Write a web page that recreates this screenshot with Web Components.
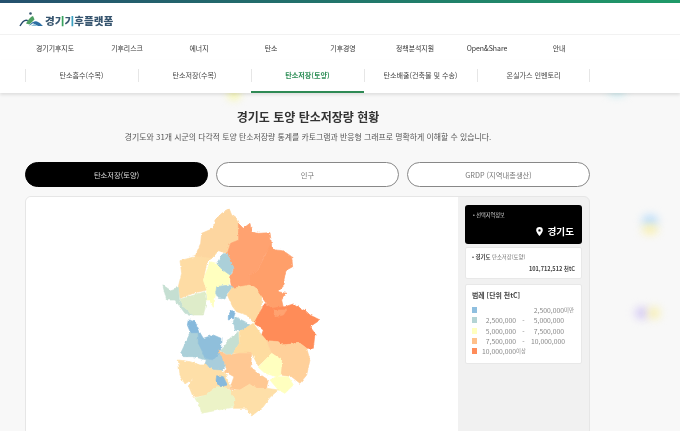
<!DOCTYPE html>
<html lang="ko"><head><meta charset="utf-8"><title>경기기후플랫폼</title>
<style>
html,body{margin:0;height:431px;overflow:hidden;background:#f8f8f8}
body{font-family:"Noto Sans CJK KR","Noto Sans",sans-serif;color:#444;position:relative;filter:blur(.35px)}
.blob{position:absolute;border-radius:50%;filter:blur(4px)}
</style></head><body>
<template id="t-header"><style>
:host{display:block;background:#fff;height:35px;box-sizing:border-box;border-bottom:1px solid #f2f2f2}
.bar{height:3px;background:linear-gradient(90deg,#24506e,#1f9a68)}
.l{display:flex;align-items:center;gap:1px;padding:7px 0 0 19px}
b{font-size:10.6px;font-weight:900;color:#37556f;line-height:19px;position:relative;top:1px}
i{font-style:normal;background:linear-gradient(90deg,#37556f 52%,#3aa35f 52%);-webkit-background-clip:text;background-clip:text;color:transparent}
i.c{background-image:linear-gradient(90deg,#37556f 52%,#3a9fc0 52%)}
</style><div class="bar"></div><div class="l"><svg width="25" height="18" viewBox="0 0 25 18"><circle cx="11.5" cy="2.5" r="1.3" fill="#37556f"/><path d="M1 15C3.5 10.5 6.5 8.5 8.8 9.7" fill="none" stroke="#24486b" stroke-width="1.4"/><path d="M7 12.5C9 8.5 12 5.5 14 5L15.5 8.5 10.5 13.5Z" fill="#4d9f62"/><path d="M10 15C13 10.5 17 9.5 19 11 21 12 22.5 13.5 24 15L19 15 14 12.3Z" fill="#2d6fa3"/><path d="M12 15 15 13.1 19 15Z" fill="#8bbfd8"/></svg><b>경<i>기</i><i class="c">기</i>후플랫폼</b></div></template>

<template id="t-nav"><style>
:host{display:grid;grid-template-columns:repeat(8,72px);padding-left:19px;height:25px;background:#fff;font-size:6.9px;color:#333;align-items:center;text-align:center}
::slotted(span){display:block}
</style><slot></slot></template>

<template id="t-sub"><style>
:host{display:block;background:#fff;height:33px;box-shadow:0 2px 3px rgba(0,0,0,.1);position:relative}
.r{display:grid;grid-template-columns:repeat(5,113px);padding-left:25px;height:33px}
</style><div class="r"><slot></slot></div></template>

<template id="t-subitem"><style>
:host{display:flex;align-items:center;justify-content:center;font-size:7.1px;color:#444;height:33px;box-sizing:border-box;position:relative;border-bottom:2px solid transparent;padding-bottom:2px}
:host([active]){color:#2f8f58;font-weight:700;border-bottom-color:#2f8a55}
:host::before{content:"";position:absolute;left:0;top:9px;height:13px;width:1px;background:#e6e6e6}
:host([last])::after{content:"";position:absolute;right:0;top:9px;height:13px;width:1px;background:#e6e6e6}
</style><slot></slot></template>

<template id="t-hero"><style>
:host{display:block;width:616px;text-align:center}
h1{margin:14px 0 0;font-size:12px;line-height:20px;font-weight:700;color:#333}
p{margin:3px 0 0;font-size:7.9px;line-height:14px;color:#555}
</style><h1>경기도 토양 탄소저장량 현황</h1><p>경기도와 31개 시군의 다각적 토양 탄소저장량 통계를 카토그램과 반응형 그래프로 명확하게 이해할 수 있습니다.</p></template>

<template id="t-tabs"><style>
:host{display:flex;gap:8px;margin:18px 0 0 25px;width:565px}
</style><slot></slot></template>
<template id="t-tab"><style>
:host{flex:1;height:25px;box-sizing:border-box;border:1px solid #888;border-radius:13px;background:#fff;color:#777;font-size:7.3px;display:flex;align-items:center;justify-content:center}
:host([on]){background:#000;border-color:#000;color:#ddd}
</style><slot></slot></template>

<template id="t-card"><style>
:host{display:flex;margin:9px 0 0 25px;width:565px;height:240px;box-sizing:border-box;border:1px solid #e6e6e6;border-radius:6px;background:#f1f1f1;overflow:hidden}
.m{width:432px;background:#fff;flex:none}
.s{flex:1;padding:8px 7px 0 7px;display:flex;flex-direction:column;gap:3px}
</style><div class="m"><slot name="map"></slot></div><div class="s"><slot></slot></div></template>

<template id="t-map"><style>
:host{display:block}
svg{display:block;width:432px;height:238px}
</style><svg viewBox="26 197 432 238"><defs><filter id="j" x="-5%" y="-5%" width="110%" height="110%"><feTurbulence type="fractalNoise" baseFrequency=".08" numOctaves="2" seed="4"/><feDisplacementMap in="SourceGraphic" scale="9" xChannelSelector="R" yChannelSelector="G"/><feGaussianBlur stdDeviation=".9"/></filter></defs><g transform="translate(150 200) scale(.3333)" stroke-width="2" stroke-linejoin="round" id="g" filter="url(#j)"></g></svg></template>

<template id="t-sel"><style>
:host{display:block;background:#000;color:#fff;border-radius:3px;height:39px;box-sizing:border-box;padding:5px 8px 0;position:relative}
.a{font-size:5.2px;line-height:9px;color:#ddd}
.b{display:flex;justify-content:flex-end;align-items:center;gap:5px;font-size:9.6px;font-weight:700;line-height:15px;margin-top:5px}
</style><div class="a">• 선택지역정보</div><div class="b"><svg width="7" height="9" viewBox="0 0 7 9"><path fill="#fff" fill-rule="evenodd" d="M3.5 0A3.3 3.3 0 0 0 .2 3.3C.2 5.6 3.5 9 3.5 9S6.8 5.6 6.8 3.3A3.3 3.3 0 0 0 3.5 0ZM3.5 2.2a1.2 1.2 0 1 1 0 2.4 1.2 1.2 0 0 1 0-2.4Z"/></svg>경기도</div></template>

<template id="t-val"><style>
:host{display:block;background:#fff;border:1px solid #e8e8e8;border-radius:2px;height:32px;box-sizing:border-box;padding:5px 6px;font-size:5.4px;color:#777}
.a{line-height:9px}.a b{color:#333}
.v{text-align:right;font-size:5.6px;font-weight:700;color:#444;line-height:9px;margin-top:3px}
</style><div class="a"><b>• 경기도</b> 탄소저장(토양)</div><div class="v">101,712,512 천tC</div></template>

<template id="t-legend"><style>
:host{display:block;background:#fff;border:1px solid #e8e8e8;border-radius:2px;height:80px;box-sizing:border-box;padding:4px 6px 0;margin-top:2px}
h2{margin:0 0 4px;font-size:6.9px;line-height:12px;font-weight:700;color:#444}
.g{display:grid;grid-template-columns:5px 39px 15px 33px auto;grid-auto-rows:10.3px;align-items:center;font-size:6.8px;color:#888;white-space:nowrap}
s{text-decoration:none;width:5px;height:6px;display:block}
.r{text-align:right}.c{text-align:center}.u{font-size:5.4px}
</style><h2>범례 [단위 천tC]</h2><div class="g">
<s style="background:#8fbfdf"></s><span></span><span></span><span class="r">2,500,000</span><span class="u">미만</span>
<s style="background:#b4d4d4"></s><span class="r">2,500,000</span><span class="c">-</span><span class="r">5,000,000</span><span></span>
<s style="background:#ffffbf"></s><span class="r">5,000,000</span><span class="c">-</span><span class="r">7,500,000</span><span></span>
<s style="background:#ffc08a"></s><span class="r">7,500,000</span><span class="c">-</span><span class="r">10,000,000</span><span></span>
<s style="background:#ff8c59"></s><span class="r">10,000,000</span><span class="u" style="grid-column:3/span 3">이상</span>
</div></template>

<div class="blob" style="left:228px;top:88px;width:12px;height:12px;background:#f6f7a8"></div>
<div class="blob" style="left:608px;top:88px;width:18px;height:8px;background:#c8ecf2"></div>
<div class="blob" style="left:642px;top:215px;width:16px;height:11px;background:#b9dcfa"></div>
<div class="blob" style="left:642px;top:225px;width:16px;height:9px;background:#fbf0a8"></div>
<div class="blob" style="left:635px;top:307px;width:14px;height:12px;background:#d4c9f4"></div>
<div class="blob" style="left:648px;top:307px;width:12px;height:12px;background:#f8f0b0"></div>

<gg-header></gg-header>
<gg-nav><span>경기기후지도</span><span>기후리스크</span><span>에너지</span><span>탄소</span><span>기후경영</span><span>정책분석지원</span><span>Open&amp;Share</span><span>안내</span></gg-nav>
<gg-sub><gg-subitem>탄소흡수(수목)</gg-subitem><gg-subitem>탄소저장(수목)</gg-subitem><gg-subitem active>탄소저장(토양)</gg-subitem><gg-subitem>탄소배출(건축물 및 수송)</gg-subitem><gg-subitem last>온실가스 인벤토리</gg-subitem></gg-sub>
<gg-hero></gg-hero>
<gg-tabs><gg-tab on>탄소저장(토양)</gg-tab><gg-tab>인구</gg-tab><gg-tab>GRDP (지역내총생산)</gg-tab></gg-tabs>
<gg-card><gg-map slot="map"></gg-map><gg-sel></gg-sel><gg-val></gg-val><gg-legend></gg-legend></gg-card>

<script>
const def=(n,t,init)=>customElements.define(n,class extends HTMLElement{constructor(){super();const r=this.attachShadow({mode:'open'});r.appendChild(document.getElementById(t).content.cloneNode(true));init&&init(r)}});
const o=330;
const shift=(a)=>a.map((v,i)=>i%2?v+o:v);
const R=[
['#fdd6a0',[238,27,245,45,258,55,265,70,266,120,242,130,232,160,205,152,185,175,160,175,135,170,152,130,155,100,190,85,195,60,215,40]],
['#ffa26f',[265,70,280,85,300,70,305,95,325,100,360,98,365,135,345,165,320,215,298,225,300,255,270,265,245,265,240,235,252,205,232,160,242,130,266,120]],
['#ff9f6b',[362,135,375,150,400,152,425,170,428,200,410,210,402,235,403,255,385,275,408,280,395,300,400,322,365,330,345,305,335,290,315,262,300,255,298,225,320,215]],
['#fedca4',[90,182,135,170,185,175,205,152,170,190,160,240,170,270,130,280,90,295,85,260,95,220]],
['#ffffbf',[180,185,200,190,215,207,240,225,238,252,200,260,195,292,190,322,178,300,168,300,170,270,160,240]],
['#abd0d9',[218,162,232,160,252,205,240,225,215,207,200,190]],
['#abd0d9',[200,260,238,255,250,262,232,280,225,297,205,295,197,280]],
['#c5dfd2',[38,255,60,270,85,262,88,298,100,320,130,345,105,340,75,300,50,300]],
['#deecc9',[90,298,165,275,168,310,160,345,130,345,100,320]],
['#fed9a0',[232,285,245,265,300,255,315,262,335,290,335,320,325,350,312,370,290,345,260,335,248,320]],
['#ff8c59',shift([312,40,325,15,345,-20,365,-5,405,-10,430,-18,470,5,480,15,510,30,480,50,495,70,490,115,470,115,450,100,395,105,385,95,350,92,335,75,340,60])],
['#ffa26f',shift([370,0,410,0,400,15,375,20])],
['#86b9dc',shift([245,0,255,10,250,25,235,30,235,15])],
['#abd0d9',shift([255,20,285,35,300,45,285,65,255,60,250,35])],
['#86b9dc',shift([115,30,135,35,148,62,150,78,125,76,112,45])],
['#abd0d9',shift([92,130,120,70,145,70,155,95,170,150,130,140,100,140])],
['#c5dfd2',shift([212,120,240,85,265,65,268,100,250,130,230,135])],
['#a8cddc',shift([190,150,210,125,228,165,215,182,190,180,165,165,170,145])],
['#8fbfdb',shift([145,60,160,85,190,75,213,85,212,125,190,150,165,145,155,120,145,100])],
['#fedca0',shift([268,65,310,40,335,75,350,92,365,130,345,150,325,168,305,130,270,130,250,130,268,100])],
['#ffd09a',shift([350,92,385,95,395,105,450,100,470,115,480,150,470,195,450,220,425,200,392,195,395,150,365,130])],
['#ffffbf',shift([365,130,395,150,392,195,380,200,345,190,325,172,345,150])],
['#ffffbf',shift([380,200,415,200,430,225,405,250,385,240,360,210])],
['#fedfa8',shift([85,150,120,155,150,165,165,165,190,180,215,182,225,185,240,235,200,230,170,255,130,262,115,225,130,205,105,222,90,195])],
['#ffc893',shift([205,120,230,135,270,130,305,130,302,170,325,190,355,210,350,235,320,235,300,222,270,240,240,235,252,200,225,185,228,165])],
['#fedfa8',shift([240,240,270,240,300,222,320,235,350,235,385,240,360,262,340,290,305,318,290,295,250,295,255,270,235,255])],
['#ecf3c7',shift([135,265,170,255,200,230,235,235,255,270,250,292,205,300,155,310,150,290])],
['#86b9dc',shift([200,197,220,200,232,225,212,230,198,212])]
];
def('gg-header','t-header');def('gg-nav','t-nav');def('gg-sub','t-sub');def('gg-subitem','t-subitem');def('gg-hero','t-hero');def('gg-tabs','t-tabs');def('gg-tab','t-tab');def('gg-card','t-card');
def('gg-map','t-map',r=>{const g=r.getElementById('g');for(const[c,p]of R){const e=document.createElementNS('http://www.w3.org/2000/svg','polygon');e.setAttribute('points',p.join(' '));e.setAttribute('fill',c);e.setAttribute('stroke',c);g.appendChild(e)}});
def('gg-sel','t-sel');def('gg-val','t-val');def('gg-legend','t-legend');
</script>
</body></html>
